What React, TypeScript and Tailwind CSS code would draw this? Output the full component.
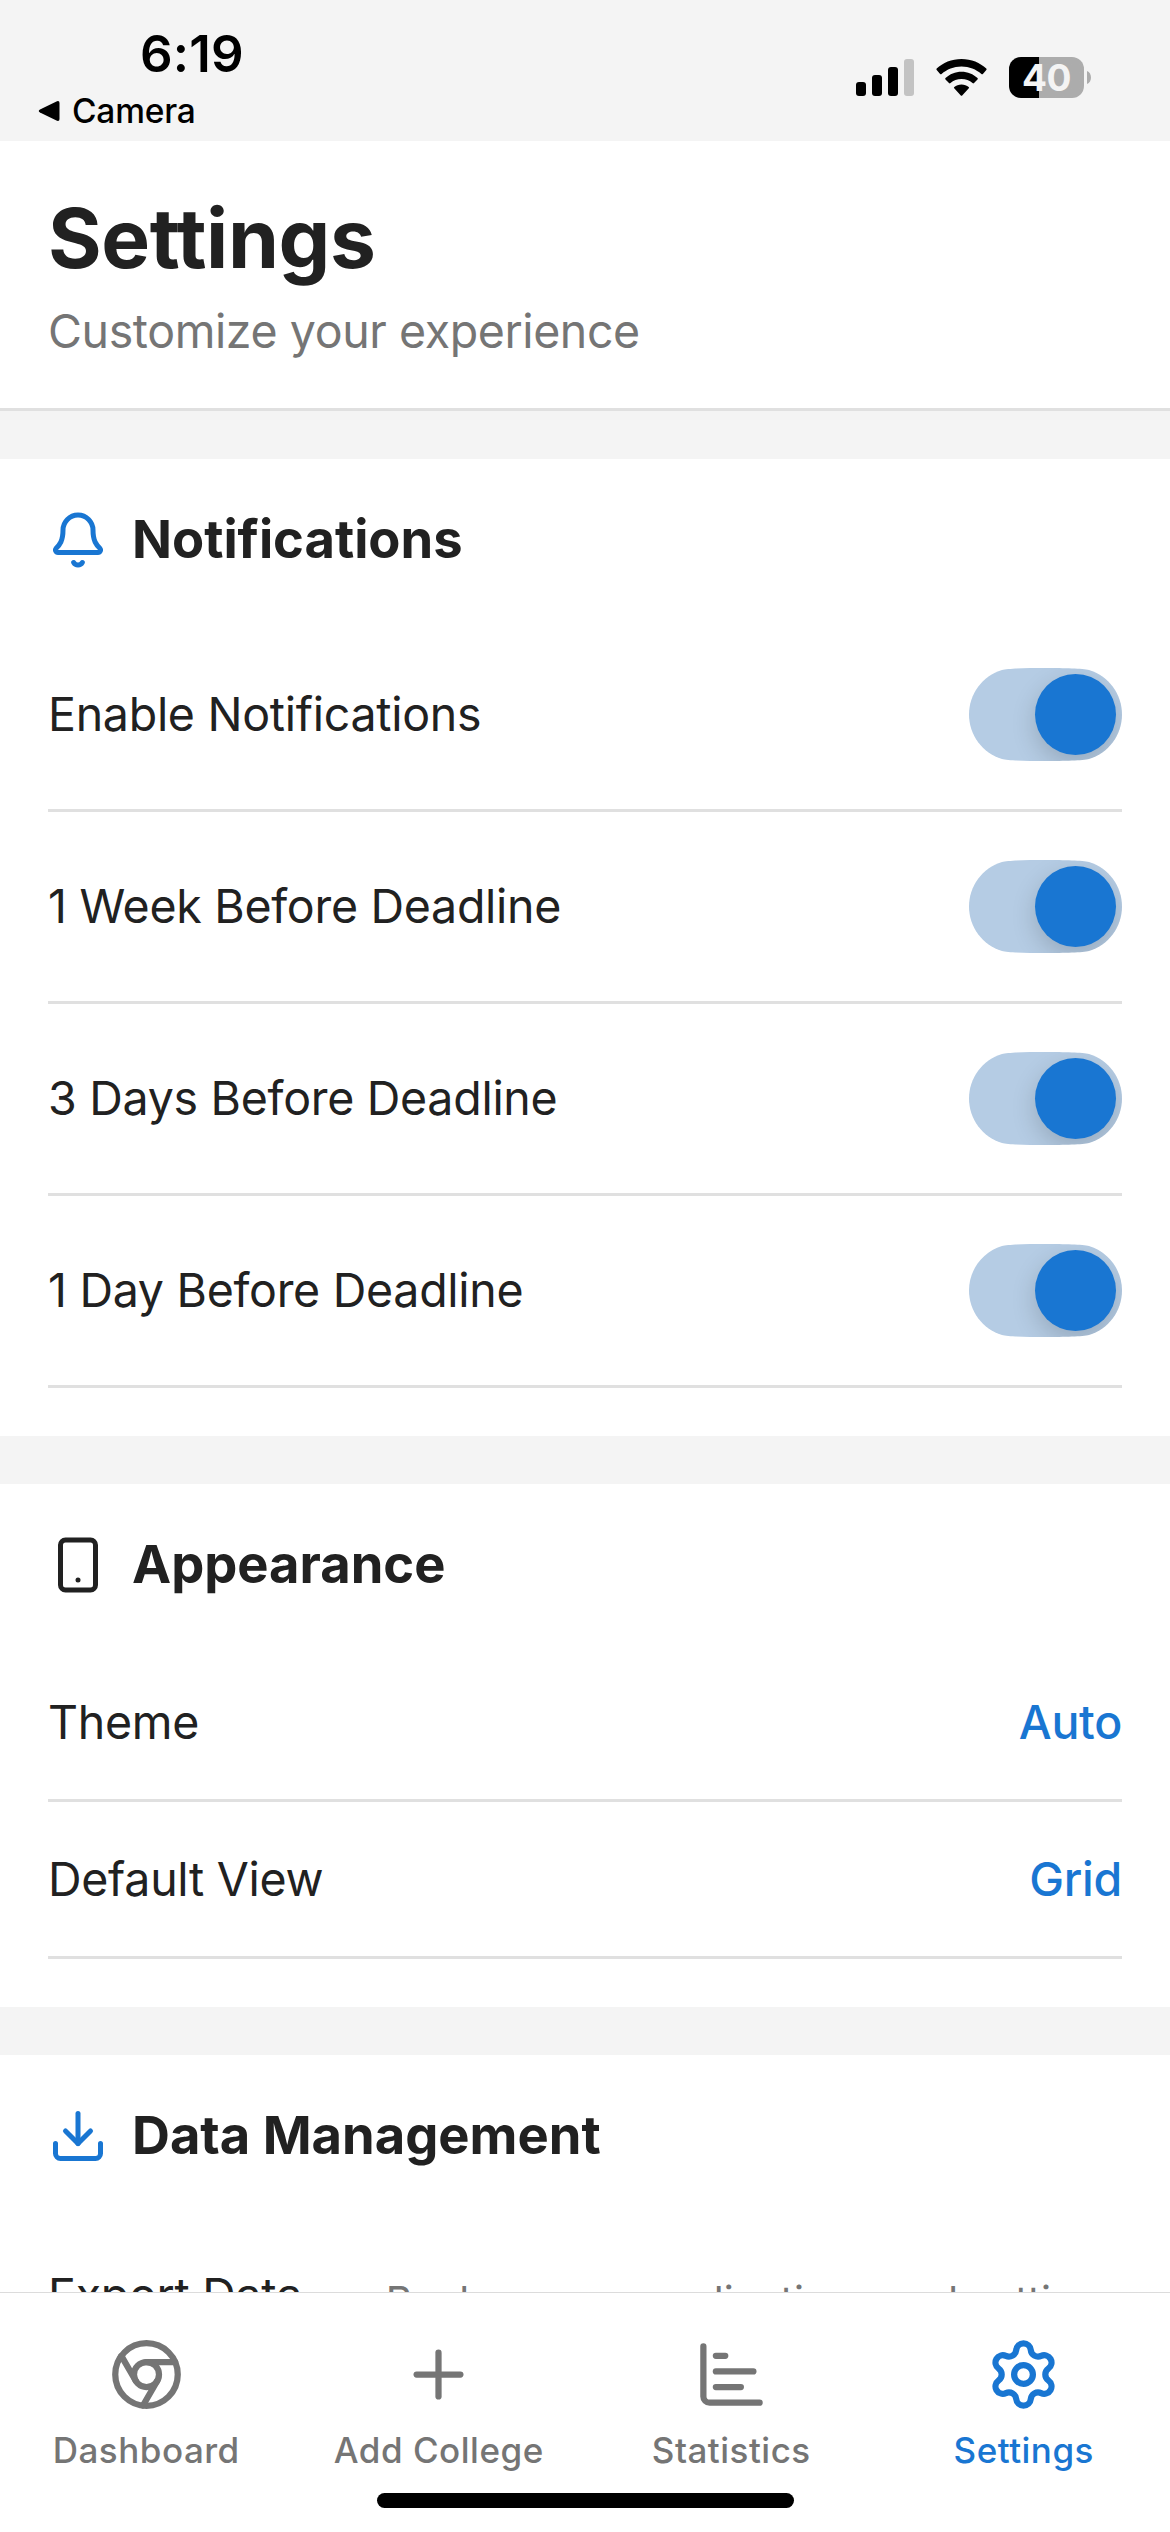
import { useState } from 'react';
import type { ReactNode } from 'react';
import { Bell, ChartBar, Chromium, Download, Plus, Settings, Smartphone } from 'lucide-react';
import type { LucideIcon } from 'lucide-react';

const StatusBar = () => (
    <div className="flex h-[141px] shrink-0 justify-between bg-[#f4f4f4] text-black">
        <div className="pl-[38px] pt-[23px]">
            <div className="pl-[102px] text-[51px] leading-[62px] font-semibold tracking-[0.2px]">6:19</div>
            <div className="flex items-center gap-[12px] pt-[5px]">
                <svg width="22" height="22" viewBox="0 0 22 22">
                    <path d="M2 9.5 19 1.2Q21.5 0.5 21.5 3V19Q21.5 21.5 19 20.8L2 12.5Q-0.5 11 2 9.5Z" />
                </svg>
                <span className="text-[33.5px] leading-[42px] font-medium tracking-[-0.2px]">Camera</span>
            </div>
        </div>

        <div className="flex items-start pr-[79px] pt-[57px]">
            {/* Cell signal */}
            <svg width="58" height="41" viewBox="0 0 58 41" className="mr-[22px]">
                <rect x="0" y="25" width="10" height="14" rx="3" />
                <rect x="16" y="18" width="10" height="21" rx="3" />
                <rect x="32" y="10" width="10" height="29" rx="3" />
                <rect x="48" y="2" width="10" height="37" rx="3" fill="#c3c3c3" />
            </svg>
            {/* Wifi */}
            <svg width="51" height="41" viewBox="0 0 51 41" className="mr-[22px]">
                <path d="M25.5 2C35.3 2 44.2 5.8 50.3 11.6Q51 12.3 50.3 13L46.9 16.9Q46.2 17.6 45.4 16.9C40.2 12.3 33.2 9.4 25.5 9.4S10.8 12.3 5.6 16.9Q4.8 17.6 4.1 16.9L.7 13Q0 12.3 .7 11.6C6.8 5.8 15.7 2 25.5 2Z" />
                <path d="M25.5 14.8C31.7 14.8 37.3 17.2 41.5 21.1Q42.2 21.8 41.5 22.5L38 26.1Q37.3 26.8 36.5 26.1C33.6 23.6 29.8 22.1 25.5 22.1S17.4 23.6 14.5 26.1Q13.7 26.8 13 26.1L9.5 22.5Q8.8 21.8 9.5 21.1C13.7 17.2 19.3 14.8 25.5 14.8Z" />
                <path d="M25.5 27.4C28.3 27.4 30.8 28.3 32.7 29.9Q33.5 30.6 32.8 31.3L26.2 38.4Q25.5 39 24.8 38.4L18.2 31.3Q17.5 30.6 18.3 29.9C20.2 28.3 22.7 27.4 25.5 27.4Z" />
            </svg>
            {/* Battery */}
            <div className="flex h-[41px] w-[75px] items-center justify-center rounded-[12px] bg-linear-to-r from-black from-40% to-[#acacac] to-40%">
                <span className="text-[37px] leading-[41px] font-bold tracking-[-0.5px] text-[#f4f4f4]">40</span>
            </div>
            <svg width="4" height="41" viewBox="0 0 4 41" className="ml-[3px]">
                <path d="M0 14C5.3 16 5.3 25 0 27Z" fill="#acacac" />
            </svg>
        </div>
    </div>
);

interface SectionProps {
    icon: LucideIcon;
    iconColor: string;
    title: string;
    children: ReactNode;
}

const Section = ({ icon: Icon, iconColor, title, children }: SectionProps) => (
    <section className="mt-[48px] bg-white p-[48px]">
        <div className="mb-[48px] flex h-[65px] items-center gap-[24px]">
            <Icon size={60} color={iconColor} />
            <h2 className="text-[52.5px] leading-[65px] font-bold tracking-[-0.02px]">{title}</h2>
        </div>
        {children}
    </section>
);

const Toggle = ({ on, onChange }: { on: boolean; onChange: () => void }) => (
    <button
        role="switch"
        aria-checked={on}
        onClick={onChange}
        className={`flex h-[93px] w-[153px] items-center px-[6px] [clip-path:path('M0_46.5C0_26_13.4_8_33_2C39_.4_58_0_76.5_0S114_.4_120_2C139.6_8_153_26_153_46.5S139.6_85_120_91C114_92.6_95_93_76.5_93S39_92.6_33_91C13.4_85_0_67_0_46.5Z')] ${on ? 'justify-end bg-[#b5cce4]' : 'justify-start bg-[#e0e0e0]'
            }`}
    >
        <span
            className={`size-[81px] rounded-full shadow-[0_9px_24px_rgba(0,0,0,0.17)] ${on ? 'bg-[#1976d2]' : 'bg-white'}`}
        />
    </button>
);

const notificationLabels = [
    'Enable Notifications',
    '1 Week Before Deadline',
    '3 Days Before Deadline',
    '1 Day Before Deadline',
];

const appearanceRows = [
    { label: 'Theme', value: 'Auto' },
    { label: 'Default View', value: 'Grid' },
];

const tabs: { label: string; icon: LucideIcon }[] = [
    { label: 'Dashboard', icon: Chromium },
    { label: 'Add College', icon: Plus },
    { label: 'Statistics', icon: ChartBar },
    { label: 'Settings', icon: Settings },
];

const App = () => {
    const [enabled, setEnabled] = useState([true, true, true, true]);
    const [activeTab, setActiveTab] = useState('Settings');

    const toggle = (index: number) => {
        setEnabled((prev) => prev.map((value, i) => (i === index ? !value : value)));
    };

    return (
        <div className="flex h-[2532px] w-[1170px] flex-col overflow-hidden bg-[#f4f4f4] font-['Inter',sans-serif] text-[#212121]">
            <StatusBar />

            <main className="min-h-0 flex-1 overflow-hidden">
                <header className="border-b-[3px] border-[#e0e0e0] bg-white p-[48px]">
                    <h1 className="text-[82px] leading-[100px] font-bold tracking-[-0.4px]">Settings</h1>
                    <p className="mt-[13px] text-[46.5px] leading-[58px] tracking-[-0.4px] text-[#757575]">
                        Customize your experience
                    </p>
                </header>

                <Section icon={Bell} iconColor="#1976d2" title="Notifications">
                    {notificationLabels.map((label, index) => (
                        <div
                            key={label}
                            className="flex items-center justify-between border-b-[3px] border-[#e0e0e0] py-[48px]"
                        >
                            <span className="pb-[1px] text-[46.5px] leading-[58px] tracking-[-0.28px]">{label}</span>
                            <Toggle on={enabled[index]} onChange={() => toggle(index)} />
                        </div>
                    ))}
                </Section>

                <Section icon={Smartphone} iconColor="#212121" title="Appearance">
                    {appearanceRows.map(({ label, value }) => (
                        <div
                            key={label}
                            className="flex items-center justify-between border-b-[3px] border-[#e0e0e0] py-[48px] text-[46.5px] leading-[58px] tracking-[-0.28px]"
                        >
                            <span>{label}</span>
                            <span className="font-medium text-[#1976d2]">{value}</span>
                        </div>
                    ))}
                </Section>

                <Section icon={Download} iconColor="#1976d2" title="Data Management">
                    <div className="flex items-start justify-between border-b-[3px] border-[#e0e0e0] py-[48px] whitespace-nowrap">
                        <span className="pt-[2px] text-[46.5px] leading-[58px] tracking-[-0.28px]">Export Data</span>
                        <span className="pt-[10px] text-[41px] leading-[54px] text-[#757575]">
                            Backup your applications and settings
                        </span>
                    </div>
                </Section>
            </main>

            {/* Tab bar */}
            <nav className="flex h-[240px] shrink-0 flex-col items-center border-t border-[#dcdcdc] bg-white">
                <div className="grid w-full grid-cols-4 pt-[44px]">
                    {tabs.map(({ label, icon: Icon }) => (
                        <button
                            key={label}
                            onClick={() => setActiveTab(label)}
                            className={`flex flex-col items-center gap-[16px] ${activeTab === label ? 'text-[#1976d2]' : 'text-[#757575]'}`}
                        >
                            <Icon size={75} />
                            <span className="text-[35px] leading-[44px] font-medium tracking-[0.5px]">{label}</span>
                        </button>
                    ))}
                </div>
                <div className="mt-[21px] h-[15px] w-[417px] rounded-full bg-black" />
            </nav>
        </div>
    );
};

export default App;
